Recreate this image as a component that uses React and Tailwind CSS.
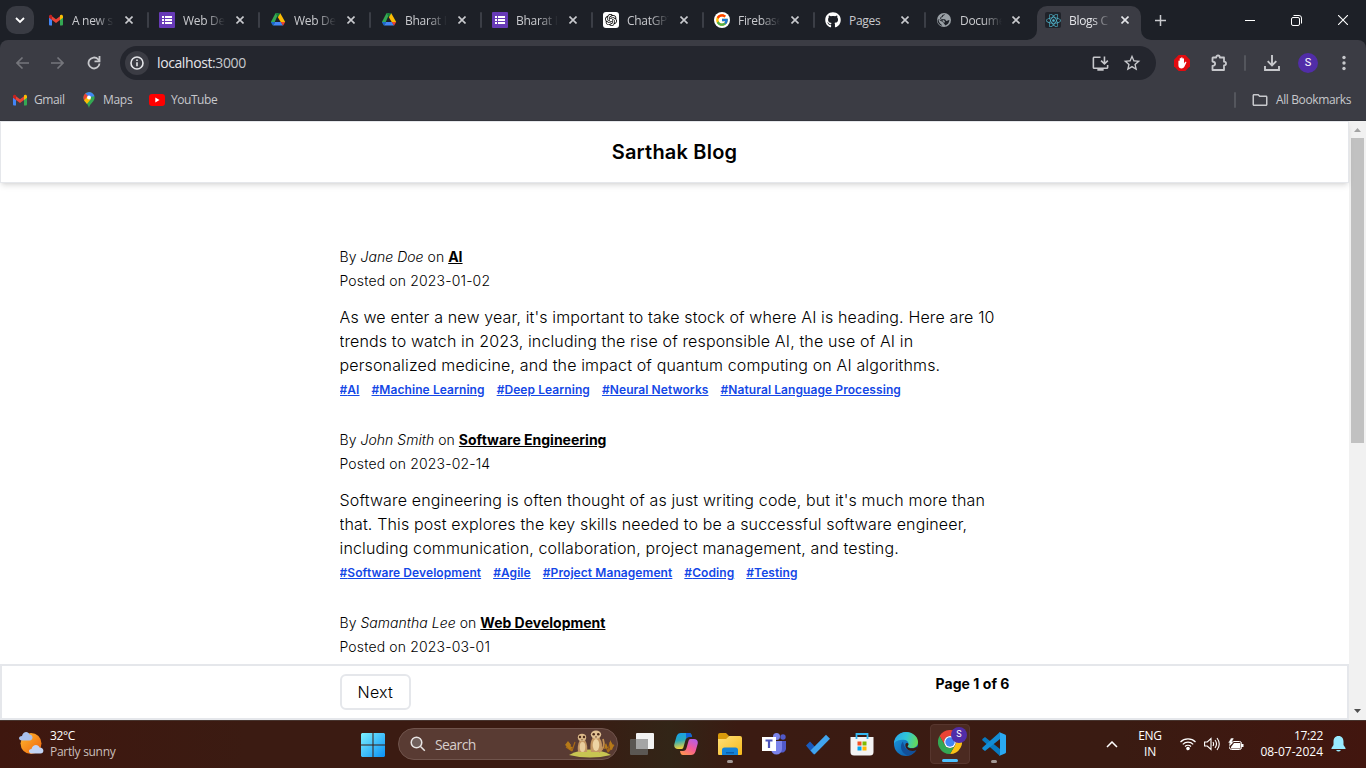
import React from "react";
import { FcGoogle } from "react-icons/fc";
import { FaGithub, FaReact } from "react-icons/fa";
import { SiOpenai } from "react-icons/si";
import { MdOutlineInstallDesktop, MdStarBorder, MdOutlineFolder } from "react-icons/md";

const GmailIcon = () => (
  <svg width="16" height="16" viewBox="0 0 16 16">
    <path fill="#4285f4" d="M1 4h3v9.500H2a1 1 0 0 1-1-1z" />
    <path fill="#34a853" d="M12 4h3v8.500a1 1 0 0 1-1 1h-2z" />
    <path fill="#ea4335" d="M4 4.200l4 3 4-3V8l-4 3-4-3z" />
    <path fill="#c5221f" d="M1 4.500C1 2.600 3 2.200 4 3.200V8L1 5.800z" />
    <path fill="#fbbc04" d="M15 4.500c0-1.900-2-2.300-3-1.300V8l3-2.200z" />
  </svg>
);

const FormsIcon = () => (
  <svg width="16" height="16" viewBox="0 0 16 16">
    <rect width="16" height="16" rx="1" fill="#673ab7" />
    <path fill="#fff" d="M3 4h2v2H3zM6 4h7v2H6zM3 7h2v2H3zM6 7h7v2H6zM3 10h2v2H3zM6 10h7v2H6z" />
  </svg>
);

const DriveIcon = () => (
  <svg width="16" height="16" viewBox="0 0 16 16">
    <path fill="#34a853" d="M5.500 1.300h3L3.300 13.500.900 10z" />
    <path fill="#188038" d="M5.500 1.300h5L8 5.600z" />
    <path fill="#fbbc04" d="M10.300 1.300 15.200 10h-4.500L7.900 5.200z" />
    <path fill="#4285f4" d="M5 10h6l2 3.600H3.200z" />
    <path fill="#1967d2" d="M.900 10H5l-2 3.800z" />
    <path fill="#ea4335" d="M10.700 10h4.500L13 13.800z" />
  </svg>
);

const ChatIcon = () => (
  <span className="flex size-4 items-center justify-center rounded-[3px] bg-white text-black">
    <SiOpenai size={12} />
  </span>
);

const GoogleIcon = () => (
  <span className="flex size-4 items-center justify-center rounded-full bg-white">
    <FcGoogle size={14} />
  </span>
);

const ReactIcon = () => (
  <span className="flex size-4 items-center justify-center rounded-[2px] bg-[#20232a] text-[#4fb3ca]">
    <FaReact size={15} />
  </span>
);

const GlobeIcon = () => (
  <svg width="16" height="16" viewBox="0 0 16 16">
    <circle cx="8" cy="8" r="7" fill="#9aa0a6" />
    <path fill="#1d2027" d="M9 2.200c-.2 1.300-1.800.8-2 2.100C6.800 5.600 5 5 5 6.300c0 1.200 2.200.7 3.500.9 1.500.2 1 1.700 2.300 1.800.8 0 .8-1 2.600-1-.2 3-2 5-4.400 5.500.3-1.600-1.500-1.300-1.400-2.800 0-1.300-1.200-1.100-2.300-1.500C4 8.800 3.500 7.700 2.500 7.500 2.700 9.900 4 12 6 13l-.5.8A6.500 6.500 0 0 1 1.600 8C2.200 7 3 7.300 3.800 7.800c1 .8 2.900 0 3.400 1.200.3.800-.7 1.200-.2 1.800.5.500 1.500 0 1.800-.7.400-1-.8-1.600-1.800-2C5.500 7.700 4 7.500 4.200 6 4.400 4.600 6 4.800 6.200 3.500 6.300 2.500 7.800 2.800 9 2.200z" />
  </svg>
);

const tabs = [
  { title: "A new s", icon: <GmailIcon /> },
  { title: "Web De", icon: <FormsIcon /> },
  { title: "Web De", icon: <DriveIcon /> },
  { title: "Bharat I", icon: <DriveIcon /> },
  { title: "Bharat I", icon: <FormsIcon /> },
  { title: "ChatGPT", icon: <ChatIcon /> },
  { title: "Firebase", icon: <GoogleIcon /> },
  { title: "Pages", icon: <FaGithub size={16} color="#fff" /> },
  { title: "Docume", icon: <GlobeIcon /> },
];

const Close = ({ className = "" }) => (
  <svg className={className} width="8" height="8" viewBox="0 0 8 8" fill="none" stroke="currentColor" strokeWidth="1.600">
    <path d="M.5.5l7 7M7.500.5l-7 7" />
  </svg>
);

const TabLabel = ({ children }) => (
  <span className="ml-2 w-[42px] shrink-0 whitespace-nowrap pt-px text-[12px] tracking-[-0.3px] [mask-image:linear-gradient(to_right,#000_55%,transparent)]">
    {children}
  </span>
);

function TabStrip() {
  return (
    <div className="flex h-10 bg-[#1d2027]">
      <div className="flex w-[38px] shrink-0 pl-1.5 pt-1.5">
        <div className="flex size-7 items-center justify-center rounded-[10px] bg-[#393b43] text-white">
          <svg width="10" height="7" viewBox="0 0 10 7" fill="none" stroke="currentColor" strokeWidth="1.800">
            <path d="M1 1l4 4 4-4" />
          </svg>
        </div>
      </div>
      {tabs.map((t, i) => (
        <div key={i} className="flex w-[111px] shrink-0 items-center pl-2.5 text-[#c9cace]">
          <span className="flex w-4 shrink-0 justify-center">{t.icon}</span>
          {t.title === "Pages" ? (
            <span className="ml-2 w-[42px] shrink-0 pt-px text-[12px] tracking-[-0.3px]">Pages</span>
          ) : (
            <TabLabel>{t.title}</TabLabel>
          )}
          <Close className={i > 6 ? "ml-2.5 shrink-0" : "ml-[11px] shrink-0"} />
          {i < 8 && <span className="ml-auto h-4 w-0.5 rounded-full bg-[#3b3e46]" />}
        </div>
      ))}
      <div className="relative flex w-[104px] shrink-0 self-end">
        <svg className="absolute -left-2.5 bottom-0" width="10" height="10">
          <path fill="#3b3c44" d="M10 0v10H0A10 10 0 0 0 10 0z" />
        </svg>
        <svg className="absolute -right-2.5 bottom-0" width="10" height="10">
          <path fill="#3b3c44" d="M0 0v10h10A10 10 0 0 1 0 0z" />
        </svg>
        <div className="flex h-[34px] w-full items-center rounded-t-[10px] bg-[#3b3c44] pb-1.5 pl-2 text-[#e4e5e9]">
          <ReactIcon />
          <TabLabel>Blogs C</TabLabel>
          <Close className="ml-2.5 shrink-0" />
        </div>
      </div>
      <div className="flex flex-1 items-center pl-[14px] text-[#c9cace]">
        <svg width="11" height="11" viewBox="0 0 11 11" stroke="currentColor" strokeWidth="1.500">
          <path d="M5.500 0v11M0 5.500h11" />
        </svg>
        <div className="ml-auto flex items-center gap-9 pr-[18px] text-white">
          <svg width="10" height="10" stroke="currentColor">
            <path d="M0 5.500h10" />
          </svg>
          <svg width="11" height="11" viewBox="0 0 11 11" fill="none" stroke="currentColor">
            <rect x=".5" y="2.500" width="8" height="8" rx="1.500" />
            <path d="M2.500.5H8A2.500 2.500 0 0 1 10.500 3v5.500" />
          </svg>
          <svg width="10" height="10" stroke="currentColor" strokeWidth="1.100">
            <path d="M0 0l10 10M10 0L0 10" />
          </svg>
        </div>
      </div>
    </div>
  );
}

function Toolbar() {
  return (
    <div className="bg-[#1d2027]">
      <div className="flex h-[46px] items-center rounded-t-lg bg-[#3b3c44] text-[#c7c8cc]">
        <svg className="ml-4 text-[#75767c]" width="13" height="12" viewBox="0 0 13 12" fill="none" stroke="currentColor" strokeWidth="1.600">
          <path d="M13 6H1M6.500.5L1 6l5.500 5.500" />
        </svg>
        <svg className="ml-[22px] text-[#75767c]" width="13" height="12" viewBox="0 0 13 12" fill="none" stroke="currentColor" strokeWidth="1.600">
          <path d="M0 6h12M6.500.5L12 6l-5.500 5.500" />
        </svg>
        <svg className="ml-[23px]" width="14" height="14" viewBox="0 0 14 14" fill="none" stroke="currentColor" strokeWidth="1.800">
          <path d="M12.500 7.500A5.500 5.500 0 1 1 11 3.200L12.500 5" />
          <path d="M12.500 0v5.300H7.500" />
        </svg>
        <div className="ml-[19px] flex h-[34px] w-[1036px] items-center rounded-full bg-[#24262e] pl-[5px]">
          <div className="flex size-6 items-center justify-center rounded-full bg-[#3b3c44] text-[#e4e5e9]">
            <svg width="14" height="14" viewBox="0 0 14 14" fill="none" stroke="currentColor" strokeWidth="1.600">
              <circle cx="7" cy="7" r="6" />
              <path d="M7 6.200v4M7 3.500v1.600" />
            </svg>
          </div>
          <span className="ml-2 pb-px text-[14px] tracking-[-0.4px] text-[#e4e5e9]">
            localhost<span className="text-[#c7c8cc]">:3000</span>
          </span>
          <MdOutlineInstallDesktop className="ml-auto" size={19} />
          <MdStarBorder className="ml-3 mr-3.5" size={20} />
        </div>
        <svg className="ml-[18px]" width="16" height="16" viewBox="0 0 16 16">
          <path fill="#e20b0f" d="M4.700 0h6.600L16 4.700v6.600L11.300 16H4.700L0 11.300V4.700z" />
          <path fill="#fff" d="M4.400 6.200c0-1 1.300-1 1.300 0V3.700c0-1 1.400-1 1.400 0V3c0-1.100 1.500-1.100 1.500 0v.9c0-1 1.400-1 1.400 0v4.500l1-1.400c.8-.7 1.700-.1 1.300.7l-1.800 3.900C9.200 14.500 4.400 14 4.400 10.500z" />
        </svg>
        <svg className="ml-5" width="18" height="18" viewBox="0 0 18 18" fill="none" stroke="currentColor" strokeWidth="1.800">
          <path d="M3 3.500h3.200c0-2.700 3.600-2.700 3.600 0H14v4.200c2.700 0 2.700 3.600 0 3.600V16H2.500v-4c3.500-.5 3.500-4 0-4.500v-3.500z" strokeLinejoin="round" />
        </svg>
        <span className="ml-4 h-4 w-0.5 rounded-full bg-[#54565d]" />
        <svg className="ml-[18px]" width="16" height="16" viewBox="0 0 16 16" fill="none" stroke="currentColor" strokeWidth="1.900">
          <path d="M8 0v10M3.700 6.200L8 10.500l4.300-4.300M1 11v4h14v-4" />
        </svg>
        <span className="ml-[18px] flex size-5 items-center justify-center rounded-full bg-[#512da8] font-['Roboto',sans-serif] text-[11px] text-white">S</span>
        <svg className="ml-6" width="4" height="16" viewBox="0 0 4 16" fill="currentColor">
          <circle cx="2" cy="2.500" r="1.700" />
          <circle cx="2" cy="8" r="1.700" />
          <circle cx="2" cy="13.500" r="1.700" />
        </svg>
      </div>
    </div>
  );
}

function Bookmarks() {
  return (
    <div className="flex h-[35px] items-center border-b border-[#34363d] bg-[#3b3c44] pb-1.5 pl-3 pr-[15px] text-[12px] text-[#c7c8cc]">
      <GmailIcon />
      <span className="ml-1.5 w-[31px] whitespace-nowrap tracking-[-0.4px]">Gmail</span>
      <svg className="ml-4" width="16" height="16" viewBox="0 0 16 16">
        <clipPath id="pin">
          <path d="M8 0a5.600 5.600 0 0 0-5.600 5.600C2.400 10 7 11.200 8 16c1-4.800 5.600-6 5.600-10.400A5.600 5.600 0 0 0 8 0z" />
        </clipPath>
        <g clipPath="url(#pin)">
          <path fill="#34a853" d="M0 0h16v16H0z" />
          <path fill="#ea4335" d="M0 0h5l3 5-5 5-3-2z" />
          <path fill="#fbbc04" d="M2 9.500l4-4.500 4 2-5 6z" />
          <path fill="#4285f4" d="M4 1l8-2 3 5-7 1z" />
        </g>
        <circle cx="8" cy="5.600" r="2" fill="#fff" />
      </svg>
      <span className="ml-1.5 w-[29px] whitespace-nowrap tracking-[-0.3px]">Maps</span>
      <svg className="ml-[17px]" width="16" height="12" viewBox="0 0 16 12">
        <rect width="16" height="12" rx="3" fill="#f00" />
        <path fill="#fff" d="M6.300 3.500v5l4.200-2.500z" />
      </svg>
      <span className="ml-1.5 tracking-[-0.45px]">YouTube</span>
      <span className="ml-auto h-4 w-0.5 rounded-full bg-[#54565d]" />
      <MdOutlineFolder className="ml-[15px]" size={18} />
      <span className="ml-[7px] w-[75px] whitespace-nowrap tracking-[-0.38px]">All Bookmarks</span>
    </div>
  );
}

const posts = [
  {
    author: "Jane Doe",
    category: "AI",
    date: "2023-01-02",
    body: "As we enter a new year, it's important to take stock of where AI is heading. Here are 10 trends to watch in 2023, including the rise of responsible AI, the use of AI in personalized medicine, and the impact of quantum computing on AI algorithms.",
    tags: ["AI", "Machine Learning", "Deep Learning", "Neural Networks", "Natural Language Processing"],
  },
  {
    author: "John Smith",
    category: "Software Engineering",
    date: "2023-02-14",
    body: "Software engineering is often thought of as just writing code, but it's much more than that. This post explores the key skills needed to be a successful software engineer, including communication, collaboration, project management, and testing.",
    tags: ["Software Development", "Agile", "Project Management", "Coding", "Testing"],
  },
  { author: "Samantha Lee", category: "Web Development", date: "2023-03-01", body: "", tags: [] },
];

function Blog() {
  return (
    <div className="flex h-[599px] bg-white font-['Inter',sans-serif] text-black">
      <div className="flex w-[1349px] flex-col">
        <header className="z-10 shrink-0 border border-gray-200 py-4 text-center text-xl font-semibold leading-7 tracking-[0.2px] shadow-md">
          Sarthak Blog
        </header>
        <main className="mx-auto min-h-0 w-[670px] flex-1 overflow-hidden pt-[62px]">
          {posts.map((p) => (
            <article key={p.author} className="mb-[26px] font-light">
              <p className="text-[14px] leading-6 tracking-[0.04px]">
                By <span className="italic">{p.author}</span> on{" "}
                <span className="font-bold tracking-normal underline">{p.category}</span>
              </p>
              <p className="text-[14px] leading-6 tracking-[0.15px]">Posted on {p.date}</p>
              <p className="mt-3 text-[16px] leading-6 tracking-[0.145px]">{p.body}</p>
              <div className="flex h-[25px] items-center gap-3 text-[12px] font-semibold tracking-[0.08px] text-blue-700 underline">
                {p.tags.map((t) => (
                  <span key={t}>#{t}</span>
                ))}
              </div>
            </article>
          ))}
        </main>
        <footer className="shrink-0 border-2 border-gray-200 py-2">
          <div className="mx-auto flex w-[670px] items-start justify-between">
            <button className="rounded-md border-2 border-gray-200 px-4 py-1 text-base font-light tracking-[0.25px]">Next</button>
            <p className="text-sm font-bold tracking-[0.04px]">Page 1 of 6</p>
          </div>
        </footer>
      </div>
      <div className="flex w-[17px] flex-col items-center bg-[#f1f1f1]">
        <svg width="17" height="17" fill="#a3a3a3">
          <path d="M5 11l3.500-4 3.500 4z" />
        </svg>
        <div className="h-[305px] w-[13px] bg-[#c1c1c1]" />
        <svg className="mt-auto" width="17" height="17" fill="#505050">
          <path d="M5 6h7l-3.500 4z" />
        </svg>
      </div>
    </div>
  );
}

const Explorer = () => (
  <svg width="26" height="24" viewBox="0 0 26 24">
    <path fill="#d99a0b" d="M1 3a2 2 0 0 1 2-2h6l3 3-3 4H1z" />
    <path fill="url(#fold)" d="M1 7h8l3-3h11a2 2 0 0 1 2 2v16a1 1 0 0 1-1 1H2a1 1 0 0 1-1-1z" />
    <path fill="#1583d8" d="M5 23v-5a2.500 2.500 0 0 1 2.500-2.500h11A2.500 2.500 0 0 1 21 18v5z" />
    <path fill="#0c5da8" d="M9 20h8v1.500H9z" />
    <defs>
      <linearGradient id="fold" x1="0" y1="0" x2="1" y2="1">
        <stop stopColor="#ffe07a" />
        <stop offset="1" stopColor="#f6b91a" />
      </linearGradient>
    </defs>
  </svg>
);

const Teams = () => (
  <svg width="24" height="22" viewBox="0 0 24 22">
    <circle cx="21" cy="4" r="2.700" fill="#5059c9" />
    <circle cx="14.500" cy="3.500" r="3.500" fill="#7b83eb" />
    <path fill="#5059c9" d="M16 8h8v8a4 4 0 0 1-6 3z" />
    <path fill="#7b83eb" d="M9 8h11v8a5.500 5.500 0 0 1-11 0z" />
    <path fill="#fff" d="M0 4h14v14H0z" />
    <path fill="#4b53bc" d="M3.500 6.500h7v2H8.100V15H5.900V8.500H3.500z" />
  </svg>
);

const Todo = () => (
  <svg width="24" height="21" viewBox="0 0 24 21">
    <path fill="#185abd" d="M0 11.500L4 7.500l8 8.500-4.500 4.500z" />
    <path fill="#41a5ee" d="M20 .8L24 4.800 8.500 20.500 4.500 16.500z" />
  </svg>
);

const Store = () => (
  <svg width="24" height="24" viewBox="0 0 24 24">
    <path fill="#f3f3f3" d="M.5 5h23v15a3.500 3.500 0 0 1-3.500 3.500H4A3.500 3.500 0 0 1 .5 20z" />
    <path fill="none" stroke="#35b8f1" strokeWidth="1.800" d="M6.500 7V2h11v5" />
    <path fill="#f25022" d="M7.500 9.500h4v4h-4z" />
    <path fill="#7fba00" d="M12.500 9.500h4v4h-4z" />
    <path fill="#00a4ef" d="M7.500 14.500h4v4h-4z" />
    <path fill="#ffb900" d="M12.500 14.500h4v4h-4z" />
  </svg>
);

const Edge = () => (
  <svg width="24" height="24" viewBox="0 0 24 24">
    <defs>
      <linearGradient id="edgeA" x1="0" y1=".3" x2="1" y2=".5">
        <stop stopColor="#2aa7ea" />
        <stop offset=".5" stopColor="#2fc6d8" />
        <stop offset="1" stopColor="#66d957" />
      </linearGradient>
      <linearGradient id="edgeB" x1="0" y1="0" x2="1" y2="1">
        <stop stopColor="#1b9de2" />
        <stop offset="1" stopColor="#0b4f9f" />
      </linearGradient>
    </defs>
    <circle cx="12" cy="12" r="12" fill="url(#edgeB)" />
    <path fill="url(#edgeA)" d="M0 12C0 5 5.500 0 12 0s12 4.500 12 10c0 4-3 6-6 6-2.500 0-4.500-.8-4.500-1.800 0-.7 1-1 1-2.500 0-2-2-4-5-4C5 7.700 1 9 0 12z" />
    <path fill="#124f98" d="M9 9.500c-4 4-2 12 5 14 3.500-.8 6.500-3 8-5.500-6 2.500-11.500.500-13-8.500z" />
    <path fill="#3b1b12" d="M14.500 12c0 1.500-1 1.800-1 2.500 0 1 2 1.800 4.500 1.800 2 0 3.800-.5 6-2l-.8 3.200-1.200.7c-5 2.300-11.500-.7-10.500-6.200.5-1.500 2.500-1.500 3 0z" />
  </svg>
);

const Chrome = () => (
  <svg width="24" height="24" viewBox="0 0 24 24">
    <path fill="#ea4335" d="M1.600 6A12 12 0 0 1 22.400 6H12a6 6 0 0 0-5.200 9z" />
    <path fill="#fbc116" d="M22.400 6A12 12 0 0 1 12 24l5.200-9A6 6 0 0 0 12 6z" />
    <path fill="#34a853" d="M12 24A12 12 0 0 1 1.600 6l5.200 9a6 6 0 0 0 10.400 0z" />
    <circle cx="12" cy="12" r="5.900" fill="#fff" />
    <circle cx="12" cy="12" r="4.700" fill="#4285f4" />
  </svg>
);

const Code = () => (
  <svg width="24" height="24" viewBox="0 0 24 24">
    <path fill="#0879bf" d="M1 6.500L3 5l15 12v7L.5 8.500A1.500 1.500 0 0 1 1 6.500z" />
    <path fill="#138dd5" d="M1 17.500L3 19 18 7V0L.5 15.500A1.500 1.500 0 0 0 1 17.500z" />
    <path fill="#2aa9f2" d="M17 0l6 2.500a1.500 1.500 0 0 1 1 1.500v16a1.500 1.500 0 0 1-1 1.500L17 24c1-.5 1-1 1-2V2c0-1 0-1.500-1-2z" />
  </svg>
);

const TaskView = () => (
  <svg width="24" height="22" viewBox="0 0 24 22">
    <rect x="6" width="18" height="16" rx="1" fill="#f2f2f2" />
    <rect y="6" width="18" height="16" rx="1" fill="#5b5753" />
    <path fill="#a5a5a5" d="M6 6h12v10H6z" />
  </svg>
);

const Copilot = () => (
  <svg width="24" height="22" viewBox="0 0 24 22">
    <defs>
      <linearGradient id="cpA" x1="0" y1="0" x2=".2" y2="1">
        <stop stopColor="#159ff0" />
        <stop offset=".5" stopColor="#28a9ba" />
        <stop offset="1" stopColor="#f2d13b" />
      </linearGradient>
      <linearGradient id="cpB" x1=".8" y1="0" x2=".2" y2="1">
        <stop stopColor="#b55de7" />
        <stop offset=".5" stopColor="#f35a9a" />
        <stop offset="1" stopColor="#ff944e" />
      </linearGradient>
    </defs>
    <path fill="url(#cpA)" d="M7 0h8c2 0 2.500 1.500 3 4h-3c-2 0-3 1-3.500 3l-2 7c-.5 2-1.500 2-3 2H4c-3 0-4.500-2-3.500-5.500l2-7C3.200 1 5 0 7 0z" />
    <path fill="#1261d6" d="M12 0h3c2 0 2.500 1.500 3 4h-3c-1.500 0-2.500.7-3 2z" />
    <path fill="url(#cpB)" d="M17 22H9c-2 0-2.500-1.500-3-4h3c2 0 3-1 3.500-3l2-7c.5-2 1.500-2 3-2H20c3 0 4.500 2 3.500 5.500l-2 7c-.7 2.500-2.500 3.500-4.500 3.500z" />
  </svg>
);

const Meerkats = () => (
  <svg width="50" height="28" viewBox="0 0 50 28">
    <path fill="#c8c552" d="M4 25Q25 14 46 25Q25 30 4 25z" />
    <g fill="none" stroke="#a96a15" strokeWidth="1.200">
      <path d="M7 21L4 13M7 21L1 17M7 21l3-9M43 22l2-10M43 22l6-7M43 22l-3-8" />
    </g>
    <path fill="#b67a18" d="M3 11l3 4-2 3-4-3zM8 17l-3 3-4-4zM45 10l3 5-3 3zM49 14l-2 6-3-1zM41 13l2 5-4 1z" />
    <path fill="none" stroke="#c18e51" strokeWidth="1.800" d="M34 22q7-4 4-13" />
    <path fill="#c49763" d="M15 10h5q3 5 2 12h-9q-1-7 2-12z" />
    <ellipse cx="17.500" cy="17" rx="2.800" ry="5" fill="#e9cd9c" />
    <ellipse cx="17" cy="7.500" rx="4.200" ry="3.700" fill="#d9b888" />
    <path fill="#c49763" d="M28 7h6q5 7 2 15H26q-2-8 2-15z" />
    <ellipse cx="31" cy="15" rx="3.300" ry="6" fill="#edd3a4" />
    <ellipse cx="31" cy="4.600" rx="5.200" ry="4.200" fill="#e2c294" />
    <g fill="#4d2c1b">
      <circle cx="15" cy="7" r="1.200" />
      <circle cx="19" cy="7" r="1.200" />
      <circle cx="28.700" cy="4.200" r="1.300" />
      <circle cx="33.300" cy="4.200" r="1.300" />
      <path d="M16 9.500h2l-1 1zM30 6.500h2l-1 1.500z" />
    </g>
  </svg>
);

const apps = [
  { icon: <TaskView /> },
  { icon: <Copilot /> },
  { icon: <Explorer />, open: true },
  { icon: <Teams /> },
  { icon: <Todo /> },
  { icon: <Store /> },
  { icon: <Edge /> },
  { icon: <Chrome />, active: true },
  { icon: <Code />, open: true },
];

function Taskbar() {
  return (
    <div className="flex h-12 items-center border-t border-[#47342e] bg-[linear-gradient(to_right,#3f170f_0%,#3b1b12_18%,#3b1b12_42%,#322517_49%,#3b1b12_54%,#3a1b12_82%,#42160f_100%)] text-[12px] text-white">
      <svg className="ml-[18px] shrink-0 -mt-1" width="26" height="24" viewBox="0 0 26 24">
        <defs>
          <linearGradient id="sun" x1="0" y1="0" x2="1" y2="1">
            <stop stopColor="#ffb92f" />
            <stop offset="1" stopColor="#ef620b" />
          </linearGradient>
        </defs>
        <circle cx="13" cy="12.500" r="10.500" fill="url(#sun)" />
        <path fill="#a9c0ed" d="M4 9.500C0 9.500 0 5 4 5c1-5 6.500-5 7.500-1.500 4 0 4 6 0 6z" />
        <path fill="#c2d4f4" d="M14 22.500c-4 0-4-4.500-.5-4.500 1-5 7-5 8-1.500 5 0 5 6 1 6z" />
      </svg>
      <div className="ml-1.5 w-[311px] pb-px leading-4">
        <div className="text-[12px] tracking-[-0.4px]">32°C</div>
        <div className="tracking-[-0.3px] text-[#cbbfbb]">Partly sunny</div>
      </div>
      <svg className="shrink-0" width="24" height="24" viewBox="0 0 24 24">
        <defs>
          <linearGradient id="win" gradientUnits="userSpaceOnUse" x1="0" y1="0" x2="24" y2="24">
            <stop stopColor="#7df1ff" />
            <stop offset="1" stopColor="#0990f5" />
          </linearGradient>
        </defs>
        <path fill="url(#win)" d="M1 0h10.500v11.500H0V1zM12.500 0H23l1 1v10.500H12.500zM0 12.500h11.500V24H1l-1-1zM12.500 12.500H24V23l-1 1H12.500z" />
      </svg>
      <div className="-mt-px ml-[13px] flex h-8 w-[220px] shrink-0 items-center rounded-full border border-[#70544c] bg-[#593b33] pl-[11px] text-[#d7cecb]">
        <svg width="16" height="16" viewBox="0 0 16 16" fill="none" stroke="#e8e4e3" strokeWidth="1.500">
          <circle cx="6.500" cy="6.500" r="5.300" fill="#71605c" />
          <path d="M10.500 10.500l4.300 4.300" />
        </svg>
        <span className="ml-[9px] text-[14px] tracking-[-0.6px]">Search</span>
        <span className="ml-auto mr-0.5"><Meerkats /></span>
      </div>
      <div className="ml-0.5 flex h-full">
        {apps.map((a, i) => (
          <div key={i} className="flex w-11 justify-center pt-[3px]">
            <div className={a.active ? "relative flex h-10 w-10 items-center justify-center rounded border border-[#57362e] bg-[#4b2a21] pb-1" : "relative flex h-10 w-10 items-center justify-center"}>
              {a.icon}
              {a.active && (
                <>
                  <span className="absolute right-0.5 top-0.5 flex size-4 items-center justify-center rounded-full bg-[#512da8] font-['Roboto',sans-serif] text-[9px]">S</span>
                  <span className="absolute bottom-px h-[3px] w-4 rounded-full bg-[#4cc2ff]" />
                </>
              )}
              {a.open && <span className="absolute bottom-px h-[3px] w-1.5 rounded-full bg-[#a29894]" />}
            </div>
          </div>
        ))}
      </div>
      <div className="ml-auto flex items-center pb-px pr-5">
        <svg width="12" height="7" viewBox="0 0 12 7" fill="none" stroke="currentColor" strokeWidth="1.500">
          <path d="M1 6l5-5 5 5" />
        </svg>
        <div className="ml-5 w-6 text-center leading-4 tracking-[-0.3px]">
          <div>ENG</div>
          <div>IN</div>
        </div>
        <svg className="ml-[18px]" width="16" height="14" viewBox="0 0 16 14" fill="none" stroke="currentColor" strokeWidth="1.200">
          <path d="M.5 5a10.500 10.500 0 0 1 15 0M2.800 7.300a7.300 7.300 0 0 1 10.400 0M5 9.500a4.200 4.200 0 0 1 6 0" />
          <circle cx="8" cy="11.500" r="1.200" fill="currentColor" />
        </svg>
        <svg className="ml-2" width="16" height="14" viewBox="0 0 16 14" fill="none" stroke="currentColor" strokeWidth="1.100">
          <path d="M.6 5h2.700L7 1.500v11L3.300 9H.6zM9 5q1.200 2 0 4M11 3q3 4 0 8M13 1q4.500 6 0 12" />
        </svg>
        <svg className="ml-2" width="16" height="13" viewBox="0 0 16 13">
          <rect x="1.500" y="3.500" width="12" height="8" rx="2" fill="none" stroke="currentColor" />
          <path fill="currentColor" d="M6 5h6.500v5.500H3V9zM14 6h1.500v3H14z" />
          <path fill="currentColor" stroke="#3a1b12" strokeWidth=".5" d="M3 0L0 5h2L1 9l5-5H4l2-4z" />
        </svg>
        <div className="ml-[15px] w-[64px] text-right leading-4">
          <div className="tracking-[-0.3px]">17:22</div>
          <div className="whitespace-nowrap">08-07-2024</div>
        </div>
        <svg className="ml-2" width="15" height="16" viewBox="0 0 15 16" fill="#99ebff">
          <path d="M7.500 0C4 0 2.500 2.500 2.500 5.500V9L.5 12v1h14v-1l-2-3V5.500C12.500 2.500 11 0 7.500 0zM5 14h5q-2.500 3-5 0z" />
        </svg>
      </div>
    </div>
  );
}

export default function App() {
  return (
    <div className="h-[768px] w-[1366px] overflow-hidden font-['Open_Sans',sans-serif]">
      <TabStrip />
      <Toolbar />
      <Bookmarks />
      <Blog />
      <Taskbar />
    </div>
  );
}
